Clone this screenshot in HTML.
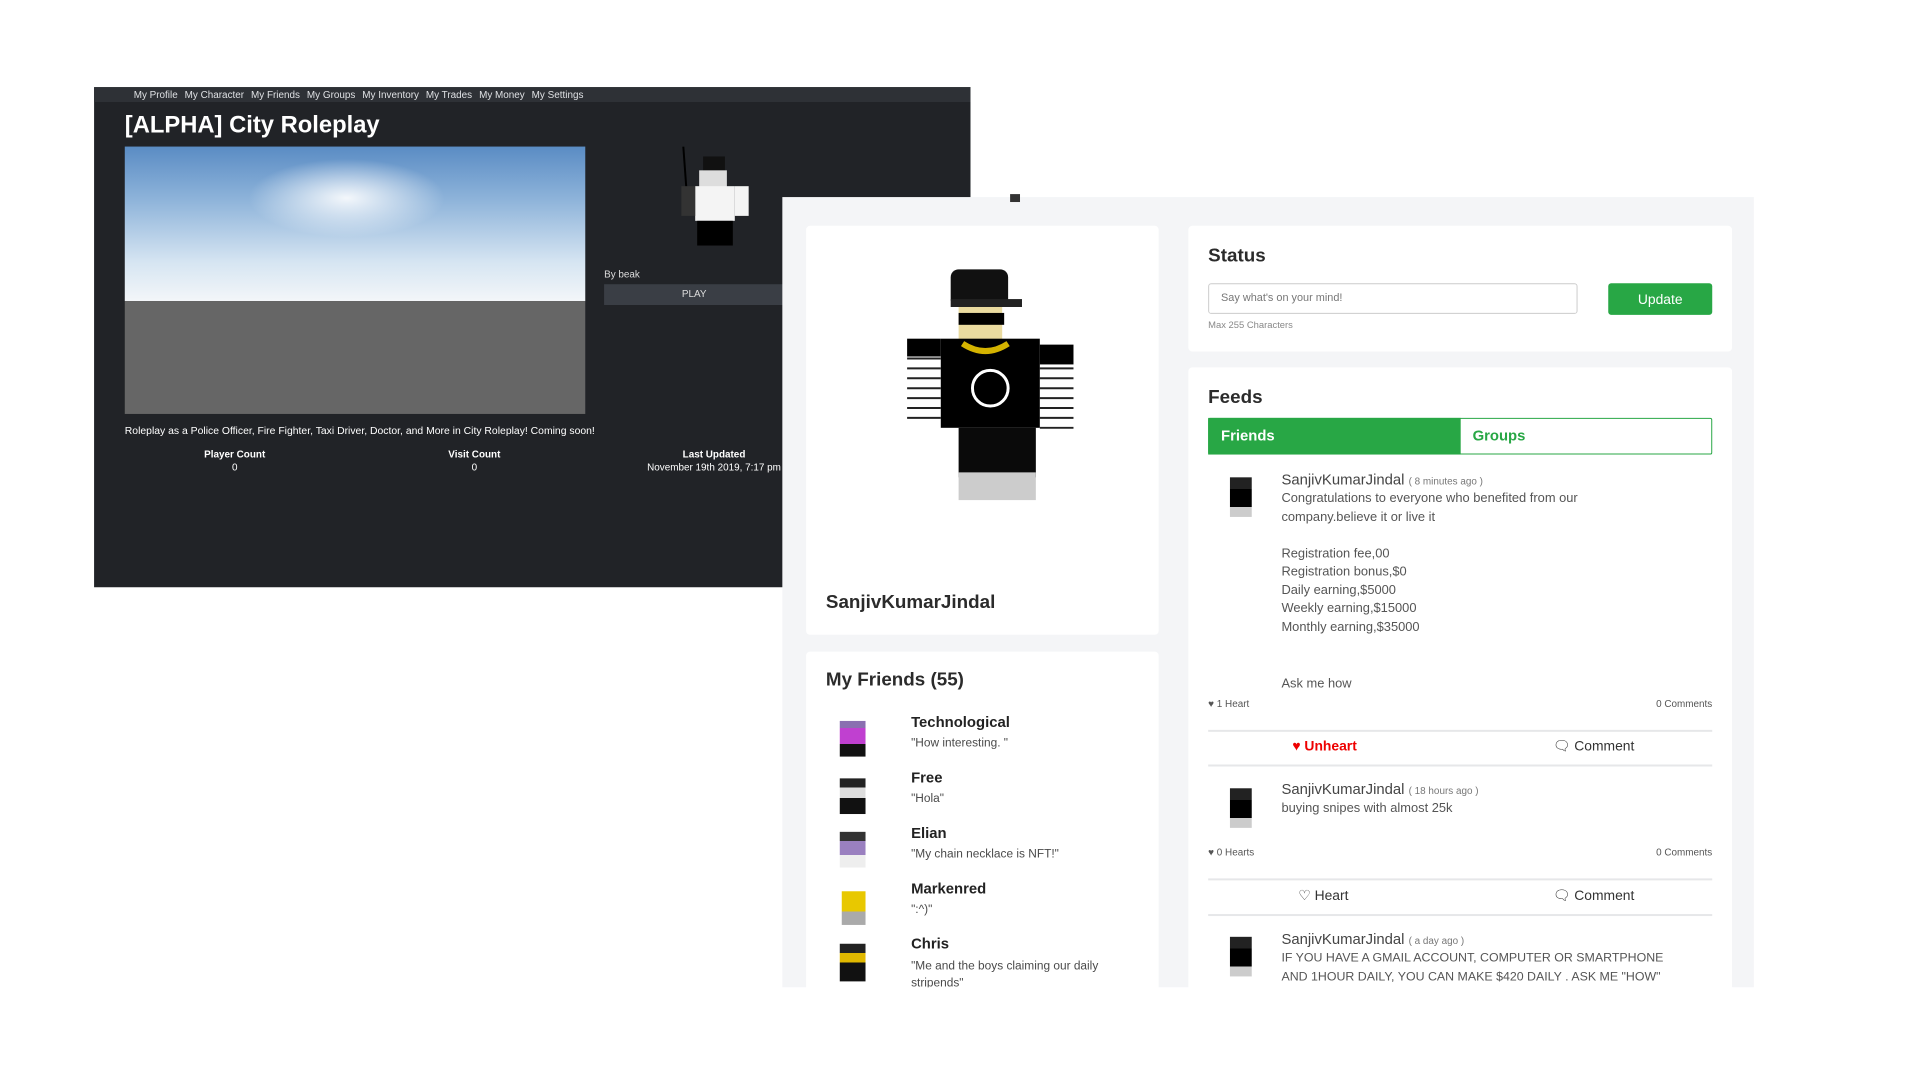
<!DOCTYPE html>
<html><head><meta charset="utf-8"><style>
*{margin:0;padding:0;box-sizing:border-box}
body{width:1920px;height:1080px;background:#fff;position:relative;overflow:hidden;font-family:"Liberation Sans",sans-serif}
#wrap{position:absolute;left:0;top:0;width:1920px;height:1080px;transform:scale(0.9903);transform-origin:0 0}
.a{position:absolute;white-space:nowrap}
.dark{left:95px;top:88px;width:885px;height:505px;background:#212327}
.nav{left:95px;top:88px;width:885px;height:15px;background:#2e3136}
.nav span{font-size:10px;color:#dfe1e4;margin-right:7px}
.w{color:#fff}
.card{position:absolute;background:#fff;border-radius:4px}
.g{color:#4a4a4a}
.tit{font-weight:bold;color:#2b2b2b}
.sep{position:absolute;left:1220px;width:509px;height:2px;background:#e6e7e9}
.sm{font-size:10px;color:#555}
.post{font-size:13px;color:#555;line-height:18.5px}
</style></head><body><div id="wrap">
<div class="a dark"></div>
<div class="a nav" style="padding-left:40px;line-height:14px"><span>My Profile</span><span>My Character</span><span>My Friends</span><span>My Groups</span><span>My Inventory</span><span>My Trades</span><span>My Money</span><span>My Settings</span></div>
<div class="a w" style="left:126px;top:113px;font-size:24px;font-weight:bold">[ALPHA] City Roleplay</div>
<div class="a" style="left:126px;top:148px;width:465px;height:156px;background:linear-gradient(#5a8cc4 0%,#8fb4da 35%,#d6e5f2 75%,#f3f6f9 100%)"></div>
<div class="a" style="left:250px;top:160px;width:200px;height:80px;background:radial-gradient(ellipse at center,rgba(255,255,255,.9),rgba(255,255,255,0) 70%)"></div>
<div class="a" style="left:126px;top:304px;width:465px;height:114px;background:#666"></div>
<svg class="a" style="left:680px;top:148px" width="80" height="100"><line x1="10" y1="0" x2="14" y2="55" stroke="#000" stroke-width="2"/><rect x="30" y="10" width="22" height="18" fill="#111"/><rect x="26" y="24" width="28" height="18" fill="#ddd"/><rect x="22" y="40" width="40" height="35" fill="#f4f4f4"/><rect x="8" y="40" width="14" height="30" fill="#333"/><rect x="62" y="40" width="14" height="30" fill="#f4f4f4"/><rect x="24" y="75" width="36" height="25" fill="#000"/></svg>
<div class="a" style="left:610px;top:272px;font-size:10px;color:#ddd">By beak</div>
<div class="a" style="left:610px;top:287px;width:182px;height:21px;background:#3a3e45;color:#ddd;font-size:10px;text-align:center;line-height:21px">PLAY</div>
<div class="a w" style="left:126px;top:429px;font-size:10.5px">Roleplay as a Police Officer, Fire Fighter, Taxi Driver, Doctor, and More in City Roleplay! Coming soon!</div>
<div class="a w" style="left:187px;top:454px;width:100px;text-align:center;font-size:10px;font-weight:bold">Player Count<br><span style="font-weight:normal;line-height:16px">0</span></div>
<div class="a w" style="left:429px;top:454px;width:100px;text-align:center;font-size:10px;font-weight:bold">Visit Count<br><span style="font-weight:normal;line-height:16px">0</span></div>
<div class="a w" style="left:651px;top:454px;width:140px;text-align:center;font-size:10px;font-weight:bold">Last Updated<br><span style="font-weight:normal;line-height:16px">November 19th 2019, 7:17 pm</span></div>

<div class="a" style="left:790px;top:199px;width:981px;height:798px;background:#f4f5f7"></div>
<div class="a" style="left:1020px;top:196px;width:10px;height:8px;background:#333"></div>

<div class="card" style="left:814px;top:228px;width:356px;height:413px"></div>
<svg class="a" style="left:910px;top:262px" width="190" height="250">
<rect x="50" y="10" width="58" height="38" rx="8" fill="#111"/><rect x="50" y="40" width="72" height="8" fill="#222"/>
<rect x="58" y="48" width="44" height="40" fill="#eadba0"/><rect x="58" y="54" width="46" height="12" fill="#000"/>
<rect x="6" y="80" width="34" height="105" fill="#fff"/><g stroke="#222" stroke-width="2"><line x1="6" y1="100" x2="40" y2="100"/><line x1="6" y1="110" x2="40" y2="110"/><line x1="6" y1="120" x2="40" y2="120"/><line x1="6" y1="130" x2="40" y2="130"/><line x1="6" y1="140" x2="40" y2="140"/><line x1="6" y1="150" x2="40" y2="150"/><line x1="6" y1="160" x2="40" y2="160"/></g>
<rect x="6" y="80" width="34" height="18" fill="#000"/>
<rect x="140" y="86" width="34" height="105" fill="#fff"/><g stroke="#222" stroke-width="2"><line x1="140" y1="110" x2="174" y2="110"/><line x1="140" y1="120" x2="174" y2="120"/><line x1="140" y1="130" x2="174" y2="130"/><line x1="140" y1="140" x2="174" y2="140"/><line x1="140" y1="150" x2="174" y2="150"/><line x1="140" y1="160" x2="174" y2="160"/><line x1="140" y1="170" x2="174" y2="170"/></g>
<rect x="140" y="86" width="34" height="20" fill="#000"/>
<rect x="40" y="80" width="100" height="90" fill="#000"/>
<path d="M62 85 Q85 100 108 85" stroke="#d4b300" stroke-width="6" fill="none"/>
<circle cx="90" cy="130" r="18" stroke="#fff" stroke-width="3" fill="none"/>
<rect x="58" y="170" width="78" height="50" fill="#0a0a0a"/><rect x="58" y="215" width="78" height="28" fill="#ccc"/>
</svg>
<div class="a tit" style="left:834px;top:598px;font-size:19px">SanjivKumarJindal</div>

<div class="card" style="left:814px;top:658px;width:356px;height:345px"></div>
<div class="a tit" style="left:834px;top:676px;font-size:19px">My Friends (55)</div>
<div class="a" style="left:920px;top:721px;font-size:15px;font-weight:bold;color:#222">Technological</div><div class="a g" style="left:920px;top:743px;font-size:12px">"How interesting. "</div>
<div class="a" style="left:920px;top:777px;font-size:15px;font-weight:bold;color:#222">Free</div><div class="a g" style="left:920px;top:799px;font-size:12px">"Hola"</div>
<div class="a" style="left:920px;top:833px;font-size:15px;font-weight:bold;color:#222">Elian</div><div class="a g" style="left:920px;top:855px;font-size:12px">"My chain necklace is NFT!"</div>
<div class="a" style="left:920px;top:889px;font-size:15px;font-weight:bold;color:#222">Markenred</div><div class="a g" style="left:920px;top:911px;font-size:12px">":^)"</div>
<div class="a" style="left:920px;top:945px;font-size:15px;font-weight:bold;color:#222">Chris</div><div class="a g" style="left:920px;top:967px;font-size:12px;line-height:17px">"Me and the boys claiming our daily<br>stripends"</div>
<div class="a" style="left:848px;top:728px;width:26px;height:36px;background:linear-gradient(#8a6fb0 0 20%,#c040d0 20% 65%,#111 65%)"></div>
<div class="a" style="left:848px;top:786px;width:26px;height:36px;background:linear-gradient(#222 0 25%,#ddd 25% 55%,#111 55%)"></div>
<div class="a" style="left:848px;top:840px;width:26px;height:36px;background:linear-gradient(#333 0 25%,#9a80c0 25% 65%,#eee 65%)"></div>
<div class="a" style="left:850px;top:900px;width:24px;height:34px;background:linear-gradient(#e8c800 0 60%,#aaa 60%)"></div>
<div class="a" style="left:848px;top:953px;width:26px;height:38px;background:linear-gradient(#222 0 25%,#e0b800 25% 50%,#111 50%)"></div>

<div class="card" style="left:1200px;top:228px;width:549px;height:127px"></div>
<div class="a tit" style="left:1220px;top:248px;font-size:19px">Status</div>
<div class="a" style="left:1220px;top:286px;width:373px;height:31px;border:1px solid #ccc;border-radius:3px;font-size:11px;color:#777;padding:8px 12px">Say what's on your mind!</div>
<div class="a" style="left:1624px;top:286px;width:105px;height:32px;background:#28a745;border-radius:3px;color:#fff;font-size:14px;text-align:center;line-height:32px">Update</div>
<div class="a" style="left:1220px;top:323px;font-size:9.5px;color:#888">Max 255 Characters</div>

<div class="card" style="left:1200px;top:371px;width:549px;height:640px"></div>
<div class="a tit" style="left:1220px;top:391px;font-size:19px">Feeds</div>
<div class="a" style="left:1220px;top:422px;width:509px;height:37px;border:1px solid #28a745;border-radius:2px"></div>
<div class="a" style="left:1220px;top:422px;width:255px;height:37px;background:#28a745;color:#fff;font-weight:bold;font-size:15px;line-height:37px;padding-left:13px">Friends</div>
<div class="a" style="left:1487px;top:422px;color:#28a745;font-weight:bold;font-size:15px;line-height:37px">Groups</div>

<div class="a" style="left:1242px;top:482px;width:22px;height:40px;background:linear-gradient(#222 0 30%,#000 30% 75%,#ccc 75%)"></div>
<div class="a" style="left:1294px;top:476px;font-size:15px;color:#444">SanjivKumarJindal <span style="font-size:10px;color:#777">( 8 minutes ago )</span></div>
<div class="a post" style="left:1294px;top:494px">Congratulations to everyone who benefited from our<br>company.believe it or live it<br><br>Registration fee,00<br>Registration bonus,$0<br>Daily earning,$5000<br>Weekly earning,$15000<br>Monthly earning,$35000</div>
<div class="a post" style="left:1294px;top:681px">Ask me how</div>
<div class="a sm" style="left:1220px;top:706px">♥ 1 Heart</div>
<div class="a sm" style="left:1660px;top:706px;width:69px;text-align:right">0 Comments</div>
<div class="sep" style="top:737px"></div>
<div class="a" style="left:1305px;top:745px;font-size:14px;color:#e00;font-weight:bold">♥ Unheart</div>
<div class="a" style="left:1568px;top:745px;font-size:14px;color:#333">🗨 Comment</div>
<div class="sep" style="top:772px"></div>

<div class="a" style="left:1242px;top:796px;width:22px;height:40px;background:linear-gradient(#222 0 30%,#000 30% 75%,#ccc 75%)"></div>
<div class="a" style="left:1294px;top:789px;font-size:15px;color:#444">SanjivKumarJindal <span style="font-size:10px;color:#777">( 18 hours ago )</span></div>
<div class="a post" style="left:1294px;top:807px">buying snipes with almost 25k</div>
<div class="a sm" style="left:1220px;top:856px">♥ 0 Hearts</div>
<div class="a sm" style="left:1660px;top:856px;width:69px;text-align:right">0 Comments</div>
<div class="sep" style="top:887px"></div>
<div class="a" style="left:1311px;top:896px;font-size:14px;color:#333">♡ Heart</div>
<div class="a" style="left:1568px;top:896px;font-size:14px;color:#333">🗨 Comment</div>
<div class="sep" style="top:923px"></div>

<div class="a" style="left:1242px;top:946px;width:22px;height:40px;background:linear-gradient(#222 0 30%,#000 30% 75%,#ccc 75%)"></div>
<div class="a" style="left:1294px;top:940px;font-size:15px;color:#444">SanjivKumarJindal <span style="font-size:10px;color:#777">( a day ago )</span></div>
<div class="a post" style="left:1294px;top:958px;font-size:12.5px">IF YOU HAVE A GMAIL ACCOUNT, COMPUTER OR SMARTPHONE<br>AND 1HOUR DAILY, YOU CAN MAKE $420 DAILY . ASK ME "HOW"</div>
<div class="a" style="left:790px;top:997px;width:1000px;height:83px;background:#fff"></div>
</div></body></html>
